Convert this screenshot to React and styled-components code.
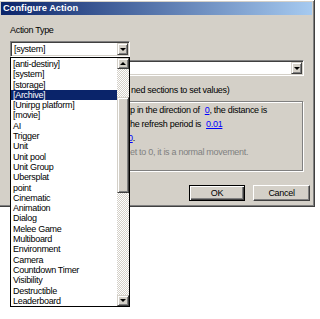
import React from "react";
import styled, { createGlobalStyle } from "styled-components";

const face = "#d4d0c8";
const uiFont = `"Liberation Sans", Arial, sans-serif`;

const Global = createGlobalStyle`
	html, body {
		margin: 0;
		padding: 0;
		background: #fff;
	}
	body {
		width: 320px;
		height: 319px;
		overflow: hidden;
		font-family: ${uiFont};
		font-size: 9px;
		letter-spacing: -0.3px;
		color: #000;
	}
`;

const Dialog = styled("div")`
	box-sizing: border-box;
	width: 317px;
	height: 208px;
	margin: -1px 0 0 -2px;
	padding: 2px;
	background: ${face};
	border: 1px solid;
	border-color: ${face} #404040 #404040 ${face};
	box-shadow: inset 1px 1px #fff, inset -1px -1px #808080;
	display: flex;
	flex-direction: column;
`;

const TitleBar = styled("div")`
	height: 13px;
	padding-left: 2px;
	background: linear-gradient(to right, #0a246a, #a6caf0);
	color: #fff;
	font-weight: bold;
	font-size: 9.3px;
	letter-spacing: 0;
	line-height: 13px;
	white-space: nowrap;
`;

const Body = styled("div")`
	display: flex;
	flex-direction: column;
	padding: 0 8px 0 9px;
`;

const Label = styled("div")`
	margin-top: 9px;
	line-height: 12px;
`;

const ComboWrap = styled("div")`
	position: relative;
	margin-top: ${(p) => p.top}px;
	width: ${(p) => p.w}px;
	z-index: ${(p) => (p.open ? 2 : 1)};
`;

const Combo = styled("div")`
	box-sizing: border-box;
	height: 16px;
	display: flex;
	padding: 1px;
	background: #fff;
	border: 1px solid;
	border-color: #808080 #fff #fff #808080;
	box-shadow: inset 1px 1px #404040, inset -1px -1px ${face};
`;

const ComboText = styled("div")`
	flex: 1;
	padding-left: 2px;
	line-height: 12px;
	white-space: nowrap;
	overflow: hidden;
`;

const RaisedBtn = styled("div")`
	box-sizing: border-box;
	width: ${(p) => p.w || 11}px;
	height: ${(p) => p.h || 12}px;
	background: ${face};
	border: 1px solid;
	border-color: ${face} #404040 #404040 ${face};
	box-shadow: inset 1px 1px #fff, inset -1px -1px #808080;
	display: flex;
	align-items: center;
	justify-content: center;
	flex-shrink: 0;
`;

const Arrow = styled("span")`
	width: 0;
	height: 0;
	border-left: 3px solid transparent;
	border-right: 3px solid transparent;
	${(p) =>
		p.up
			? "border-bottom: 3px solid #000;"
			: "border-top: 3px solid #000;"}
`;

const DropList = styled("div")`
	position: absolute;
	top: 16px;
	left: 0;
	box-sizing: border-box;
	width: 120px;
	height: 250px;
	background: #fff;
	border: 1px solid #000;
	display: flex;
`;

const Items = styled("div")`
	flex: 1;
	padding-top: 1px;
	overflow: hidden;
`;

const Item = styled("div")`
	height: 10.3px;
	line-height: 10.3px;
	padding-left: 2px;
	white-space: nowrap;
	background: ${(p) => (p.sel ? "#0a246a" : "transparent")};
	color: ${(p) => (p.sel ? "#fff" : "#000")};
`;

const ScrollBar = styled("div")`
	width: 12px;
	display: flex;
	flex-direction: column;
`;

const Track = styled("div")`
	height: ${(p) => p.h}px;
	background-color: #fff;
	background-image: conic-gradient(${face} 25%, #fff 0 50%, ${face} 0 75%, #fff 0);
	background-size: 2px 2px;
`;

const Note = styled("div")`
	margin-top: 8px;
	line-height: 12px;
	white-space: nowrap;
`;

const Covered = styled("span")`
	display: inline-block;
	width: ${(p) => p.w}px;
	overflow: hidden;
	white-space: nowrap;
	vertical-align: top;
`;

const GroupBox = styled("div")`
	margin-top: 5px;
	box-sizing: border-box;
	width: 293px;
	height: 70px;
	padding: 1px 0 0 6px;
	border: 1px solid #808080;
	box-shadow: inset 1px 1px #fff, 1px 1px #fff;
`;

const Line = styled("div")`
	line-height: 14px;
	white-space: nowrap;
	color: ${(p) => (p.dim ? "#808080" : "#000")};
`;

const Link = styled("span")`
	color: #0000ff;
	text-decoration: underline;
	margin-left: ${(p) => p.gap || 0}px;
`;

const ButtonRow = styled("div")`
	display: flex;
	justify-content: flex-end;
	gap: 8px;
	margin-top: 14px;
	margin-right: -6px;
`;

const Button = styled("div")`
	box-sizing: border-box;
	width: ${(p) => p.w}px;
	height: 16px;
	display: flex;
	align-items: center;
	justify-content: center;
	background: ${face};
	border: 1px solid;
	border-color: ${(p) => (p.primary ? "#000" : "#fff #404040 #404040 #fff")};
	box-shadow: ${(p) =>
		p.primary
			? "inset 1px 1px #fff, inset -1px -1px #404040, inset -2px -2px #808080"
			: "inset -1px -1px #808080"};
	line-height: 12px;
`;

const types = [
	"[anti-destiny]",
	"[system]",
	"[storage]",
	"[Archive]",
	"[Unirpg platform]",
	"[movie]",
	"AI",
	"Trigger",
	"Unit",
	"Unit pool",
	"Unit Group",
	"Ubersplat",
	"point",
	"Cinematic",
	"Animation",
	"Dialog",
	"Melee Game",
	"Multiboard",
	"Environment",
	"Camera",
	"Countdown Timer",
	"Visibility",
	"Destructible",
	"Leaderboard",
];

export default function App() {
	return (
		<>
			<Global />
			<Dialog>
				<TitleBar>Configure Action</TitleBar>
				<Body>
					<Label>Action Type</Label>
					<ComboWrap top={5} w={120} open>
						<Combo>
							<ComboText>[system]</ComboText>
							<RaisedBtn>
								<Arrow />
							</RaisedBtn>
						</Combo>
						<DropList>
							<Items>
								{types.map((t) => (
									<Item key={t} sel={t === "[Archive]"}>
										{t}
									</Item>
								))}
							</Items>
							<ScrollBar>
								<RaisedBtn w={12} h={11}>
									<Arrow up />
								</RaisedBtn>
								<Track h={28} />
								<RaisedBtn w={12} h={96} />
								<Track h={102} />
								<RaisedBtn w={12} h={11}>
									<Arrow />
								</RaisedBtn>
							</ScrollBar>
						</DropList>
					</ComboWrap>
					<ComboWrap top={3} w={294}>
						<Combo>
							<ComboText>Unit - Jump</ComboText>
							<RaisedBtn>
								<Arrow />
							</RaisedBtn>
						</Combo>
					</ComboWrap>
					<Note>
						<Covered w={121}>(Click the underli</Covered>ned sections to set values)
					</Note>
					<GroupBox>
						<Line>
							<Covered w={113}>Make the unit jum</Covered>p in the direction of
							<Link gap={5}>0</Link>, the distance is
						</Line>
						<Line>
							<Covered w={113}>at speed 0, and t</Covered>he refresh period is
							<Link gap={5}>0.01</Link>
						</Line>
						<Line>
							<Covered w={111}>The jump height is </Covered>
							<Link>0</Link>.
						</Line>
						<Line dim>
							<Covered w={113}>If the height is s</Covered>et to 0, it is a normal movement.
						</Line>
					</GroupBox>
					<ButtonRow>
						<Button w={56} primary>
							OK
						</Button>
						<Button w={57}>Cancel</Button>
					</ButtonRow>
				</Body>
			</Dialog>
		</>
	);
}
